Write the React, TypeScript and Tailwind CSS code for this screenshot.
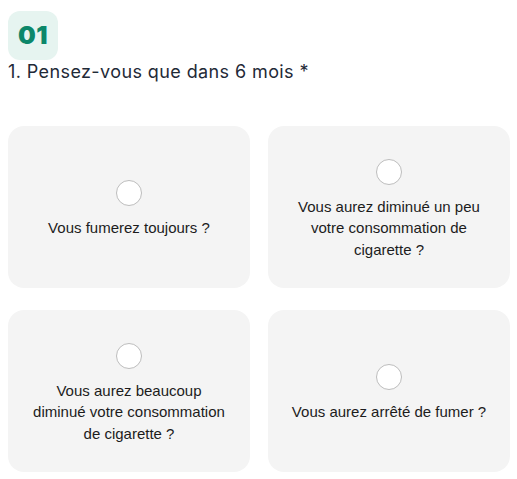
import React from "react";

const options = [
  "Vous fumerez toujours ?",
  "Vous aurez diminué un peu votre consommation de cigarette ?",
  "Vous aurez beaucoup diminué votre consommation de cigarette ?",
  "Vous aurez arrêté de fumer ?",
];

const OptionCard = ({ label }: { label: string }) => {
  return (
    <label className="flex h-[162px] cursor-pointer flex-col items-center justify-center rounded-2xl bg-[#f4f4f4] px-[22px] pt-[5px]">
      <span className="block h-[26px] w-[26px] shrink-0 rounded-full border border-[#bdbdbd] bg-white" />
      <span className="mt-[11px] text-center font-['Liberation_Sans',Arial,sans-serif] text-[15px] leading-[21.5px] text-[#1c1c1c]">
        {label}
      </span>
    </label>
  );
};

export default function App() {
  return (
    <div className="min-h-screen bg-white px-2 pt-[11px]">
      <div className="flex h-[49px] w-[50px] items-center justify-center rounded-xl bg-[#e6f4f0]">
        <span className="font-['Inter',sans-serif] text-[25px] font-black leading-none tracking-[0.5px] text-[#0c876a]">
          01
        </span>
      </div>
      <h2 className="font-['Inter',sans-serif] text-[18px] leading-[24px] tracking-[0.4px] text-[#1f2a37]">
        1. Pensez-vous que dans 6 mois *
      </h2>
      <div className="mt-[42px] grid w-[502px] grid-cols-2 gap-x-[18px] gap-y-[22px]">
        {options.map((item, index) => (
          <OptionCard key={index} label={item} />
        ))}
      </div>
    </div>
  );
}
